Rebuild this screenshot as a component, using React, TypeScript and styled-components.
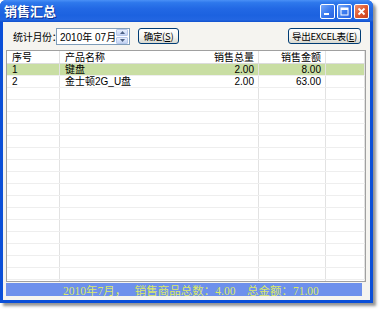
import React from "react";
import styled, { createGlobalStyle } from "styled-components";

const Global = createGlobalStyle`
  html, body { margin: 0; padding: 0; background: #ffffff; }
  body { font-family: Tahoma, "Liberation Sans", "Noto Sans CJK SC", sans-serif; font-size: 11px; }
`;

const Page = styled.div`
  width: 383px;
  height: 311px;
  position: relative;
  overflow: hidden;
`;

const Window = styled.div`
  width: 373px;
  height: 303px;
  display: flex;
  flex-direction: column;
  background: #0a4fd8;
  border-radius: 6px 6px 0 0;
  box-shadow: 3px 3px 3px rgba(60, 60, 60, 0.55);
  box-sizing: border-box;
  padding: 0 3px 3px 3px;
`;

const TitleBar = styled.div`
  height: 22px;
  flex: none;
  display: flex;
  align-items: center;
  padding: 0 0 0 2px;
  margin: 0 -3px;
  border-radius: 6px 6px 0 0;
  background: linear-gradient(#4a90f6 0%, #2e78ec 12%, #2268e4 40%, #1c62e0 70%, #2266e2 90%, #1050cc 100%);
`;

const Title = styled.div`
  flex: 1;
  color: #ffffff;
  font-family: "Noto Sans CJK SC", sans-serif;
  font-weight: 700;
  font-size: 13px;
  line-height: 22px;
  padding-left: 2px;
  text-shadow: 1px 1px 0 #0a2f90;
`;

const Controls = styled.div`
  display: flex;
  gap: 2px;
  padding-right: 4px;
`;

const CtlBtn = styled.div<{ $close?: boolean }>`
  width: 15px;
  height: 15px;
  border: 1px solid #ffffff;
  border-radius: 2px;
  box-sizing: border-box;
  display: flex;
  align-items: center;
  justify-content: center;
  background: ${(p) =>
    p.$close
      ? "linear-gradient(135deg, #f09070 0%, #e05a30 50%, #c8401c 100%)"
      : "linear-gradient(135deg, #78a8f8 0%, #3c7cf0 50%, #2a62e0 100%)"};
`;

const Body = styled.div`
  flex: 1;
  min-height: 0;
  display: flex;
  flex-direction: column;
  background: #f5f4f0;
  padding: 0 3px 4px 3px;
`;

const Toolbar = styled.div`
  height: 28px;
  flex: none;
  display: flex;
  align-items: center;
  padding: 0 0 0 7px;
`;

const Label = styled.span`
  font-family: "Noto Sans CJK SC", sans-serif;
  font-size: 10px;
  color: #000;
  white-space: nowrap;
  width: 43px;
  letter-spacing: -0.3px;
`;

const DateBox = styled.div`
  width: 74px;
  height: 17px;
  border: 1px solid #7f9db9;
  background: #fff;
  display: flex;
  align-items: center;
  box-sizing: border-box;
  margin-right: 8px;
`;

const DateText = styled.span`
  flex: 1;
  padding-left: 3px;
  font-family: "Liberation Sans", "Noto Sans CJK SC", sans-serif;
  font-size: 10px;
  white-space: pre;
  color: #000;
`;

const Spin = styled.div`
  width: 12px;
  height: 15px;
  display: flex;
  flex-direction: column;
  gap: 1px;
  margin-right: 1px;
`;

const SpinHalf = styled.div`
  flex: 1;
  background: linear-gradient(#e8effc, #c4d4f4);
  border: 1px solid #b8c8ea;
  border-radius: 1px;
  box-sizing: border-box;
  display: flex;
  align-items: center;
  justify-content: center;
`;

const Btn = styled.div<{ $w: number }>`
  width: ${(p) => p.$w}px;
  height: 16px;
  box-sizing: border-box;
  border: 1px solid #003c74;
  border-radius: 3px;
  background: linear-gradient(#ffffff 0%, #f2f2ee 60%, #d8d8cf 100%);
  display: flex;
  align-items: center;
  justify-content: center;
  font-family: "Noto Sans CJK SC", sans-serif;
  font-size: 9.5px;
  white-space: nowrap;
  color: #000;
  letter-spacing: -0.3px;
`;

const Spacer = styled.div`
  flex: 1;
`;

const Grid = styled.div`
  flex: 1;
  min-height: 0;
  border: 1px solid #a0a0a0;
  background: #ffffff;
  display: flex;
  flex-direction: column;
  overflow: hidden;
  margin-right: 1px;
`;

const Row = styled.div<{ $bg?: string; $head?: boolean }>`
  display: grid;
  grid-template-columns: 53px 132px 67px 67px 1fr;
  height: ${(p) => (p.$head ? 12 : 11)}px;
  flex: none;
  background: ${(p) => p.$bg || "transparent"};
  border-bottom: 1px solid ${(p) => (p.$head ? "#dcdcdc" : "#eeeeee")};
`;

const Cell = styled.div<{ $right?: boolean; $head?: boolean; $faint?: boolean }>`
  border-right: 1px solid ${(p) => (p.$faint ? "transparent" : "#e2e2e2")};
  padding: 0 4px 0 5px;
  text-align: ${(p) => (p.$right ? "right" : "left")};
  font-family: "Liberation Sans", "Noto Sans CJK SC", sans-serif;
  font-size: 10px;
  line-height: ${(p) => (p.$head ? 13 : 11)}px;
  color: #000;
  white-space: nowrap;
  overflow: hidden;
`;

const Status = styled.div`
  height: 13px;
  flex: none;
  margin-top: 1px;
  margin-right: 5px;
  background: #6d90ec;
  display: flex;
  align-items: center;
  padding-left: 57px;
  font-family: "Liberation Serif", "Noto Sans CJK SC", serif;
  font-size: 11.5px;
  color: #dbe966;
  white-space: pre;
  overflow: hidden;
`;

const rows = [
  ["1", "键盘", "2.00", "8.00"],
  ["2", "金士顿2G_U盘", "2.00", "63.00"],
];

export default function App() {
  const empties = Array.from({ length: 17 });
  return (
    <Page>
      <Global />
      <Window>
        <TitleBar>
          <Title>销售汇总</Title>
          <Controls>
            <CtlBtn>
              <svg width="9" height="9" viewBox="0 0 9 9"><rect x="1" y="6" width="5" height="2" fill="#fff" /></svg>
            </CtlBtn>
            <CtlBtn>
              <svg width="9" height="9" viewBox="0 0 9 9"><rect x="1" y="1" width="7" height="7" fill="none" stroke="#fff" strokeWidth="1" /><rect x="1" y="1" width="7" height="2" fill="#fff" /></svg>
            </CtlBtn>
            <CtlBtn $close>
              <svg width="9" height="9" viewBox="0 0 9 9"><path d="M1.5 1.5 L7.5 7.5 M7.5 1.5 L1.5 7.5" stroke="#fff" strokeWidth="1.8" /></svg>
            </CtlBtn>
          </Controls>
        </TitleBar>
        <Body>
          <Toolbar>
            <Label>统计月份：</Label>
            <DateBox>
              <DateText>{"2010年 07月"}</DateText>
              <Spin>
                <SpinHalf>
                  <svg width="5" height="3" viewBox="0 0 5 3"><path d="M0 3 L2.5 0 L5 3 Z" fill="#4d6185" /></svg>
                </SpinHalf>
                <SpinHalf>
                  <svg width="5" height="3" viewBox="0 0 5 3"><path d="M0 0 L2.5 3 L5 0 Z" fill="#4d6185" /></svg>
                </SpinHalf>
              </Spin>
            </DateBox>
            <Btn $w={41}>确定(<u>S</u>)</Btn>
            <Spacer />
            <Btn $w={73}>导出EXCEL表(<u>E</u>)</Btn>
            <div style={{ width: 6 }} />
          </Toolbar>
          <Grid>
            <Row $head>
              <Cell $head>序号</Cell>
              <Cell $head $faint>产品名称</Cell>
              <Cell $head $right>销售总量</Cell>
              <Cell $head $right>销售金额</Cell>
              <Cell $head />
            </Row>
            {rows.map((r, i) => (
              <Row key={i} $bg={i === 0 ? "#c9dea3" : undefined}>
                <Cell>{r[0]}</Cell>
                <Cell $faint>{r[1]}</Cell>
                <Cell $right>{r[2]}</Cell>
                <Cell $right>{r[3]}</Cell>
                <Cell />
              </Row>
            ))}
            {empties.map((_, i) => (
              <Row key={"e" + i}>
                <Cell />
                <Cell $faint />
                <Cell />
                <Cell />
                <Cell />
              </Row>
            ))}
          </Grid>
          <Status>{"2010年7月，   销售商品总数：4.00    总金额：71.00"}</Status>
        </Body>
      </Window>
    </Page>
  );
}
